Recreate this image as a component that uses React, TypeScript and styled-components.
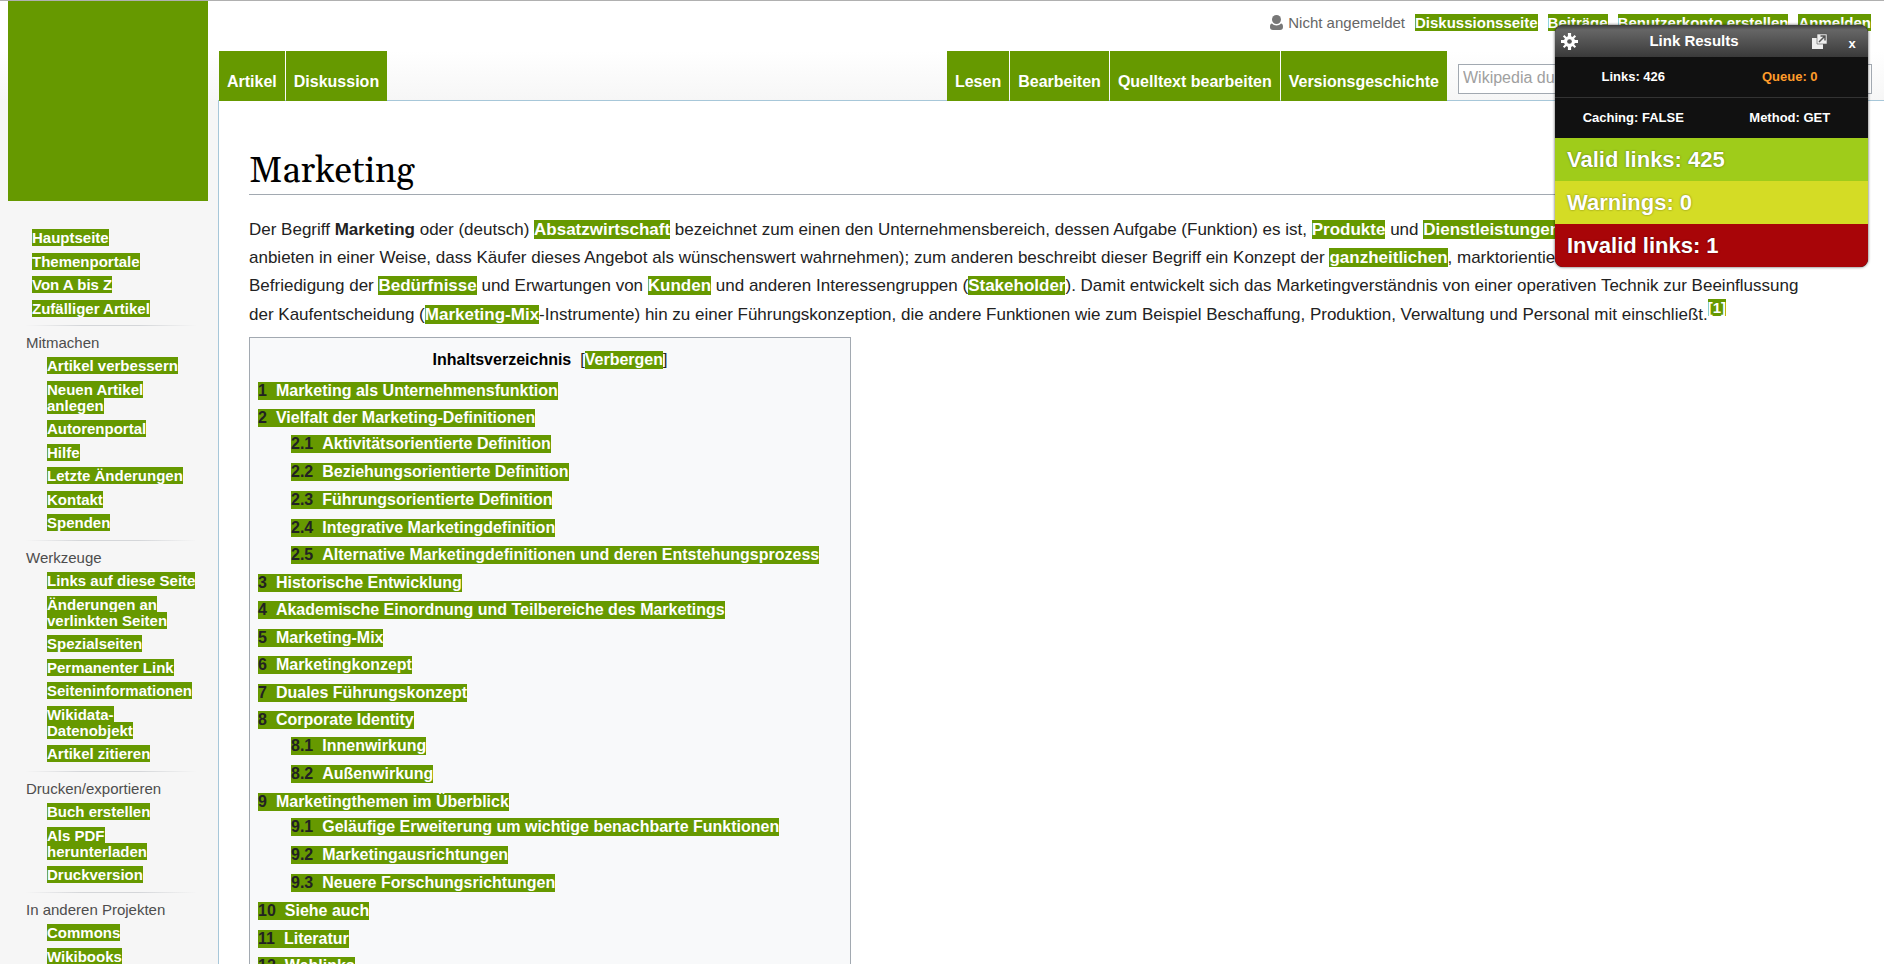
import React from "react";
import styled, { createGlobalStyle, css } from "styled-components";

const GREEN = "#669900";

const GlobalStyle = createGlobalStyle`
  * { box-sizing: border-box; }
  body {
    margin: 0;
    background: #f6f6f6;
    color: #222;
    font-family: "Liberation Sans", Arial, sans-serif;
  }
  ul, ol { list-style: none; margin: 0; padding: 0; }
`;

const Page = styled.div`
  position: relative;
  display: flex;
  height: 100vh;
  overflow: hidden;
  border-top: 1px solid #b0b0b0;
  background: linear-gradient(#fff 50px, #f6f6f6 100px);
`;

const MarkedLink = styled.a`
  background: ${GREEN};
  color: #fff;
  font-weight: bold;
  text-decoration: none;
`;

/* Sidebar */

const Sidebar = styled.aside`
  flex: 0 0 218px;
  padding-left: 8px;
  font-size: 15px;
  line-height: 16px;
`;

const Logo = styled.a`
  display: block;
  width: 200px;
  height: 200px;
  margin-bottom: 29px;
  background: ${GREEN};
`;

const Portal = styled.nav`
  margin: 0 22px 0 18px;
  padding-bottom: 1px;
`;

const PortalTitle = styled.h3`
  margin: 0;
  padding: 9px 0 7px;
  border-top: 1px solid;
  border-image: linear-gradient(to right, #f6f6f600, #d4d6d9 33%, #d4d6d9 66%, #f6f6f600) 1;
  color: #4d4d4d;
  font-size: 15px;
  font-weight: normal;
`;

const PortalList = styled.ul<{ $main?: boolean }>`
  padding-left: ${(p) => (p.$main ? 6 : 21)}px;

  li { padding-bottom: 8px; }
  li:nth-child(even) { padding-bottom: 7px; }
`;

/* Header */

const Main = styled.div`
  flex: 1;
  min-width: 0;
  display: flex;
  flex-direction: column;
`;

const Header = styled.header`
  display: flex;
  flex-direction: column;
  margin-bottom: -1px;
  padding-left: 1px;
  z-index: 1;
`;

const Personal = styled.ul`
  display: flex;
  justify-content: flex-end;
  gap: 10px;
  height: 50px;
  padding: 13px 13px 0 0;
  font-size: 15px;
  line-height: 17px;
`;

const Anonymous = styled.li`
  display: flex;
  gap: 4px;
  color: #666;
`;

const UserIcon = styled.svg`
  width: 15px;
  height: 17px;
  fill: #777;
`;

const TabBar = styled.div`
  display: flex;
  justify-content: space-between;
`;

const HeaderRight = styled.div`
  display: flex;
`;

const Tabs = styled.nav`
  display: flex;
  gap: 1px;
`;

const Tab = styled.a`
  height: 50px;
  padding: 21px 8px 0;
  background: ${GREEN};
  color: #fff;
  font-size: 16px;
  font-weight: bold;
  line-height: 20px;
  text-decoration: none;
`;

const Search = styled.input`
  width: 414px;
  height: 30px;
  margin: 13px 12px 0 11px;
  padding: 0 4px 2px;
  border: 1px solid #a2a9b1;
  background: #fff;
  font-family: inherit;
  font-size: 16px;

  &::placeholder { color: #a0a0a0; opacity: 1; }
`;

/* Article */

const Article = styled.main`
  flex: 1;
  padding: 49px 30px 0;
  border: solid #a7c7d9;
  border-width: 1px 0 0 1px;
  background: #fff;
`;

const Title = styled.h1`
  margin: 0 0 21px;
  border-bottom: 1px solid #a2a9b1;
  color: #000;
  font-family: Gelasio, "Liberation Serif", serif;
  font-size: 36px;
  font-weight: normal;
  line-height: 44px;
`;

const Paragraph = styled.p`
  margin: 0 0 8px;
  font-size: 17px;
  line-height: 28px;
  white-space: nowrap;

  sup { font-size: 15px; line-height: 15px; }
`;

const Toc = styled.section`
  width: 602px;
  padding: 9px 8px;
  border: 1px solid #a2a9b1;
  background: #f8f9fa;
  font-size: 16px;
`;

const TocHead = styled.div`
  display: flex;
  justify-content: center;
  gap: 9px;
  margin-bottom: 5px;
  line-height: 25px;
`;

const TocTitle = styled.h2`
  margin: 0;
  color: #000;
  font-size: 16px;
`;

const TocToggle = styled.button`
  padding: 0;
  border: 0;
  background: ${GREEN};
  color: #fff;
  font: bold 16px "Liberation Sans", sans-serif;
`;

const TocList = styled.ol<{ $sub?: boolean }>`
  line-height: 28px;

  ${(p) =>
    p.$sub
      ? css`
          margin-top: -2px;
          padding-left: 33px;
          > li:nth-child(4) { line-height: 27px; }
        `
      : css`
          > li:nth-child(odd) { line-height: 27px; }
        `}
`;

const TocLink = styled(MarkedLink)`
  padding-bottom: 1px;
`;

const TocNumber = styled.span`
  margin-right: 9px;
  color: #222;
`;

/* Link checker window */

const Panel = styled.section`
  position: absolute;
  top: 24px;
  right: 16px;
  z-index: 2;
  width: 313px;
  overflow: hidden;
  border-radius: 8px;
  background: #111;
  box-shadow: 0 0 3px rgba(0, 0, 0, 0.7);
  color: #fff;
  font-weight: bold;
`;

const PanelHeader = styled.header`
  display: flex;
  align-items: center;
  height: 32px;
  padding: 0 8px 0 5px;
  background: linear-gradient(#3c3c3c, #666 15%, #3a3a3a);
`;

const PanelTitle = styled.h2`
  flex: 1;
  margin: 0;
  font-size: 15px;
  line-height: 18px;
  text-align: center;
`;

const PanelButton = styled.button<{ $close?: boolean }>`
  display: flex;
  justify-content: center;
  width: ${(p) => (p.$close ? 24 : 18)}px;
  margin-left: ${(p) => (p.$close ? 8 : 0)}px;
  padding: ${(p) => (p.$close ? "4px 0 0 8px" : "0")};
  border: 0;
  background: none;
  color: #fff;
  font: bold 13px "Liberation Sans", sans-serif;

  svg { width: 17px; height: 17px; }
`;

const StatRow = styled.div`
  display: grid;
  grid-template-columns: 1fr 1fr;
  font-size: 13px;
  line-height: 40px;
  text-align: center;

  & + & { border-top: 1px solid #333; }
`;

const Stat = styled.span<{ $queue?: boolean }>`
  color: ${(p) => (p.$queue ? "#ff9c2a" : "#fff")};
`;

const Result = styled.div<{ $color: string }>`
  padding-left: 12px;
  background: ${(p) => p.$color};
  font-size: 22px;
  line-height: 43px;
  text-shadow: 0 0 2px rgba(0, 0, 0, 0.5);
`;

const portals: { title: string; links: string[] }[] = [
  {
    title: "Mitmachen",
    links: ["Artikel verbessern", "Neuen Artikel anlegen", "Autorenportal", "Hilfe", "Letzte Änderungen", "Kontakt", "Spenden"],
  },
  {
    title: "Werkzeuge",
    links: ["Links auf diese Seite", "Änderungen an verlinkten Seiten", "Spezialseiten", "Permanenter Link", "Seiteninformationen", "Wikidata-Datenobjekt", "Artikel zitieren"],
  },
  { title: "Drucken/exportieren", links: ["Buch erstellen", "Als PDF herunterladen", "Druckversion"] },
  { title: "In anderen Projekten", links: ["Commons", "Wikibooks"] },
];

const toc: { text: string; sub?: string[] }[] = [
  { text: "Marketing als Unternehmensfunktion" },
  {
    text: "Vielfalt der Marketing-Definitionen",
    sub: [
      "Aktivitätsorientierte Definition",
      "Beziehungsorientierte Definition",
      "Führungsorientierte Definition",
      "Integrative Marketingdefinition",
      "Alternative Marketingdefinitionen und deren Entstehungsprozess",
    ],
  },
  { text: "Historische Entwicklung" },
  { text: "Akademische Einordnung und Teilbereiche des Marketings" },
  { text: "Marketing-Mix" },
  { text: "Marketingkonzept" },
  { text: "Duales Führungskonzept" },
  { text: "Corporate Identity", sub: ["Innenwirkung", "Außenwirkung"] },
  {
    text: "Marketingthemen im Überblick",
    sub: ["Geläufige Erweiterung um wichtige benachbarte Funktionen", "Marketingausrichtungen", "Neuere Forschungsrichtungen"],
  },
  { text: "Siehe auch" },
  { text: "Literatur" },
  { text: "Weblinks" },
];

const Mark = ({ children }: { children: React.ReactNode }) => <MarkedLink href="#">{children}</MarkedLink>;

const Entry = ({ number, text }: { number: string; text: string }) => (
  <TocLink href="#">
    <TocNumber>{number}</TocNumber>
    {text}
  </TocLink>
);

const LinkList = ({ links, main }: { links: string[]; main?: boolean }) => (
  <PortalList $main={main}>
    {links.map((link) => (
      <li key={link}>
        <Mark>{link}</Mark>
      </li>
    ))}
  </PortalList>
);

const GearIcon = () => (
  <svg viewBox="0 0 16 16" aria-hidden="true">
    <g stroke="#fff" strokeWidth="3">
      <path d="M8 0v16M0 8h16" />
      <path strokeWidth="2" d="M2.5 2.5l11 11M13.5 2.5l-11 11" />
    </g>
    <circle cx="8" cy="8" r="5.2" fill="#fff" />
    <circle cx="8" cy="8" r="2.2" fill="#555" />
  </svg>
);

const PopOutIcon = () => (
  <svg viewBox="0 0 17 17" aria-hidden="true">
    <path fill="#eee" d="M1 5h5v6h6v5H1z" />
    <path fill="#eee" stroke="#555" strokeWidth=".6" d="M6 1h10v10H6z" />
    <path fill="none" stroke="#555" strokeWidth="1.5" d="M8 9l5.5-5.5M9.5 3h4.5v4.5" />
  </svg>
);

export default function App() {
  return (
    <>
      <GlobalStyle />
      <Page>
        <Sidebar>
          <Logo href="#" aria-label="Hauptseite" />
          <Portal>
            <LinkList main links={["Hauptseite", "Themenportale", "Von A bis Z", "Zufälliger Artikel"]} />
          </Portal>
          {portals.map((portal) => (
            <Portal key={portal.title}>
              <PortalTitle>{portal.title}</PortalTitle>
              <LinkList links={portal.links} />
            </Portal>
          ))}
        </Sidebar>
        <Main>
          <Header>
            <Personal>
              <Anonymous>
                <UserIcon viewBox="0 0 15 17" aria-hidden="true">
                  <circle cx="7.5" cy="5.5" r="4.5" />
                  <path d="M3 9.5C1.500 9.500 1 11 1 13c0 2 1 3 3 3h7c2 0 3-1 3-3 0-2-.5-3.500-2-3.500-1 1.300-2.700 2-4.500 2s-3.500-.7-4.500-2z" />
                </UserIcon>
                Nicht angemeldet
              </Anonymous>
              <li><Mark>Diskussionsseite</Mark></li>
              <li><Mark>Beiträge</Mark></li>
              <li><Mark>Benutzerkonto erstellen</Mark></li>
              <li><Mark>Anmelden</Mark></li>
            </Personal>
            <TabBar>
              <Tabs>
                <Tab href="#">Artikel</Tab>
                <Tab href="#">Diskussion</Tab>
              </Tabs>
              <HeaderRight>
                <Tabs>
                  <Tab href="#">Lesen</Tab>
                  <Tab href="#">Bearbeiten</Tab>
                  <Tab href="#">Quelltext bearbeiten</Tab>
                  <Tab href="#">Versionsgeschichte</Tab>
                </Tabs>
                <Search type="search" placeholder="Wikipedia durchsuchen" aria-label="Wikipedia durchsuchen" />
              </HeaderRight>
            </TabBar>
          </Header>
          <Article>
            <Title>Marketing</Title>
            <Paragraph>
              Der Begriff <b>Marketing</b> oder (deutsch) <Mark>Absatzwirtschaft</Mark> bezeichnet zum einen den
              Unternehmensbereich, dessen Aufgabe (Funktion) es ist, <Mark>Produkte</Mark> und{" "}
              <Mark>Dienstleistungen</Mark> zu vermarkten (zum Verkauf
              <br />
              anbieten in einer Weise, dass Käufer dieses Angebot als wünschenswert wahrnehmen); zum anderen beschreibt
              dieser Begriff ein Konzept der <Mark>ganzheitlichen</Mark>, marktorientierten{" "}
              <Mark>Unternehmensführung</Mark> zur
              <br />
              Befriedigung der <Mark>Bedürfnisse</Mark> und Erwartungen von <Mark>Kunden</Mark> und anderen
              Interessengruppen (<Mark>Stakeholder</Mark>). Damit entwickelt sich das Marketingverständnis von einer
              operativen Technik zur Beeinflussung
              <br />
              der Kaufentscheidung (<Mark>Marketing-Mix</Mark>-Instrumente) hin zu einer Führungskonzeption, die andere
              Funktionen wie zum Beispiel Beschaffung, Produktion, Verwaltung und Personal mit einschließt.
              <sup><Mark>[1]</Mark></sup>
            </Paragraph>
            <Toc>
              <TocHead>
                <TocTitle>Inhaltsverzeichnis</TocTitle>
                <span>[<TocToggle type="button">Verbergen</TocToggle>]</span>
              </TocHead>
              <TocList>
                {toc.map((item, i) => (
                  <li key={item.text}>
                    <Entry number={`${i + 1}`} text={item.text} />
                    {item.sub && (
                      <TocList $sub>
                        {item.sub.map((text, j) => (
                          <li key={text}>
                            <Entry number={`${i + 1}.${j + 1}`} text={text} />
                          </li>
                        ))}
                      </TocList>
                    )}
                  </li>
                ))}
              </TocList>
            </Toc>
          </Article>
        </Main>
        <Panel>
          <PanelHeader>
            <PanelButton type="button" aria-label="Options"><GearIcon /></PanelButton>
            <PanelTitle>Link Results</PanelTitle>
            <PanelButton type="button" aria-label="Pop out"><PopOutIcon /></PanelButton>
            <PanelButton $close type="button" aria-label="Close">x</PanelButton>
          </PanelHeader>
          <StatRow>
            <Stat>Links: 426</Stat>
            <Stat $queue>Queue: 0</Stat>
          </StatRow>
          <StatRow>
            <Stat>Caching: FALSE</Stat>
            <Stat>Method: GET</Stat>
          </StatRow>
          <Result $color="#9fcc1a">Valid links: 425</Result>
          <Result $color="#d4dc25">Warnings: 0</Result>
          <Result $color="#a80508">Invalid links: 1</Result>
        </Panel>
      </Page>
    </>
  );
}
